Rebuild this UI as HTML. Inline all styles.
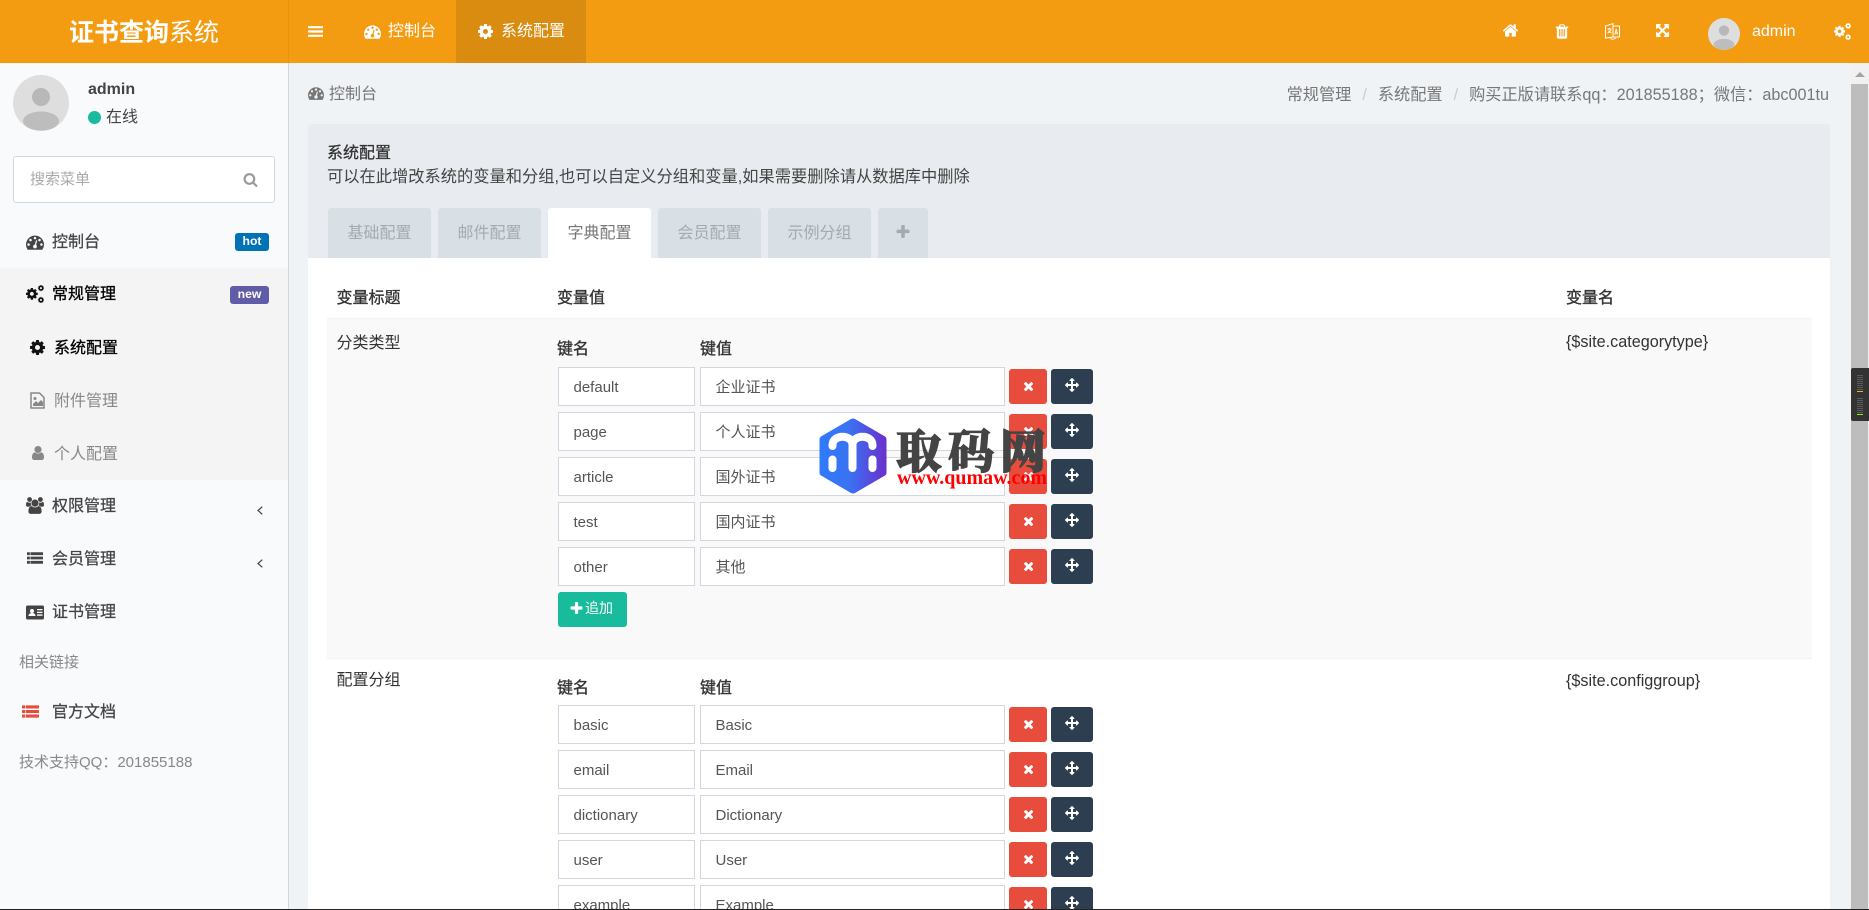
<!DOCTYPE html>
<html lang="zh"><head><meta charset="utf-8"><title>系统配置</title>
<style>
*{box-sizing:border-box}
html,body{margin:0;padding:0;width:1869px;height:910px;overflow:hidden;background:#f0f3f6;font-family:"Liberation Sans","Noto Sans CJK SC",sans-serif;font-size:16px;color:#333}
#root{position:absolute;left:0;top:0;width:1869px;height:910px;overflow:hidden;background:#f0f3f6}
.a{position:absolute}
.t{position:absolute;white-space:nowrap;line-height:20px;height:20px;margin-top:1px}
svg.i{position:absolute;display:block}
.m{color:#444;-webkit-text-stroke:.25px #444}
.k{color:#000;-webkit-text-stroke:.3px #000}
.s{color:#888}
.tab{position:absolute;top:208px;height:50px;width:103px;background:#d8dfe5;border-radius:3px 3px 0 0;color:#a3abaf;text-align:center;line-height:52px}
.inp{position:absolute;height:39px;border:1px solid #d2d6de;background:#fff;font-size:15px;line-height:39px;padding-left:14.5px;color:#555;white-space:nowrap}
.del{position:absolute;left:1009px;width:38px;height:35px;background:#e74c3c;border-radius:3px}
.mv{position:absolute;left:1051px;width:42px;height:35px;background:#2c3e50;border-radius:3px}
.bd{position:absolute;height:18px;border-radius:3px;color:#fff;font-size:12.2px;font-weight:700;text-align:center;line-height:16px}
</style></head><body>
<div id="root">
<svg width="0" height="0" style="position:absolute"><defs>
<path id="x" d="M1490 1322q0 40-28 68l-136 136q-28 28-68 28t-68-28l-294-294-294 294q-28 28-68 28t-68-28l-136-136q-28-28-28-68t28-68l294-294-294-294q-28-28-28-68t28-68l136-136q28-28 68-28t68 28l294 294 294-294q28-28 68-28t68 28l136 136q28 28 28 68t-28 68l-294 294 294 294q28 28 28 68z"/>
<path id="ar" d="M1792 896q0 26-19 45l-256 256q-19 19-45 19t-45-19-19-45v-128h-384v384h128q26 0 45 19t19 45-19 45l-256 256q-19 19-45 19t-45-19l-256-256q-19-19-19-45t19-45 45-19h128v-384h-384v128q0 26-19 45t-45 19-45-19l-256-256q-19-19-19-45t19-45l256-256q19-19 45-19t45 19 19 45v128h384v-384h-128q-26 0-45-19t-19-45 19-45l256-256q19-19 45-19t45 19l256 256q19 19 19 45t-19 45-45 19h-128v384h384v-128q0-26 19-45t45-19 45 19l256 256q19 19 19 45z"/>
<path id="cog" d="M1152 896q0-106-75-181t-181-75-181 75-75 181 75 181 181 75 181-75 75-181zm512-109v222q0 12-8 23t-20 13l-185 28q-19 54-39 91 35 50 107 138 10 12 10 25t-9 23q-27 37-99 108t-94 71q-12 0-26-9l-138-108q-44 23-91 38-16 136-29 186-7 28-36 28h-222q-14 0-24.500-8.500t-11.500-21.500l-28-184q-49-16-90-37l-141 107q-10 9-25 9-14 0-25-11-126-114-165-168-7-10-7-23 0-12 8-23 15-21 51-66.500t54-70.500q-27-50-41-99l-183-27q-13-2-21-12.500t-8-23.500v-222q0-12 8-23t19-13l186-28q14-46 39-92-40-57-107-138-10-12-10-24 0-10 9-23 26-36 98.500-107.500t94.500-71.500q13 0 26 10l138 107q44-23 91-38 16-136 29-186 7-28 36-28h222q14 0 24.500 8.500t11.500 21.500l28 184q49 16 90 37l142-107q9-9 24-9 13 0 25 10 129 119 165 170 7 8 7 22 0 12-8 23-15 21-51 66.500t-54 70.500q26 50 41 98l183 28q13 2 21 12.500t8 23.500z"/>
<path id="dash" d="M384 1152q0-53-37.500-90.500t-90.500-37.500-90.500 37.500-37.500 90.500 37.500 90.500 90.500 37.500 90.500-37.500 37.500-90.500zm192-448q0-53-37.500-90.500t-90.500-37.500-90.500 37.500-37.500 90.500 37.500 90.500 90.500 37.500 90.500-37.500 37.500-90.500zm428 481l101-382q6-26-7.500-48.500t-38.500-29.500-48 6.500-30 39.500l-101 382q-60 5-107 43.500t-63 98.500q-20 77 20 146t117 89 146-20 89-117q16-60-6-117t-72-91zm660-33q0-53-37.500-90.500t-90.500-37.500-90.500 37.500-37.500 90.500 37.500 90.500 90.500 37.500 90.500-37.500 37.500-90.500zm-640-640q0-53-37.500-90.500t-90.500-37.500-90.500 37.500-37.500 90.500 37.500 90.500 90.500 37.500 90.500-37.500 37.500-90.500zm448 192q0-53-37.500-90.500t-90.500-37.500-90.500 37.500-37.500 90.500 37.500 90.500 90.500 37.500 90.500-37.500 37.500-90.500zm320 448q0 261-141 483-19 29-54 29h-1402q-35 0-54-29-141-221-141-483 0-182 71-348t191-286 286-191 348-71 348 71 286 191 191 286 71 348z"/>
<g id="cogs"><use href="#cog" transform="translate(-97,200) scale(.76)"/><use href="#cog" transform="translate(1130,-51) scale(.4)"/><use href="#cog" transform="translate(1130,1130) scale(.4)"/></g>
<path id="user" d="M1536 1399q0 109-62.500 187t-150.500 78h-854q-88 0-150.500-78t-62.500-187q0-85 8.500-160.500t31.500-152 58.500-131 94-89 134.500-34.500q131 128 313 128t313-128q76 0 134.500 34.500t94 89 58.500 131 31.500 152 8.500 160.500zm-256-887q0 159-112.500 271.500t-271.500 112.500-271.500-112.500-112.500-271.500 112.500-271.500 271.500-112.500 271.500 112.500 112.500 271.500z"/>
<g id="list"><rect x="0" y="256" width="320" height="320" rx="30"/><rect x="384" y="256" width="1408" height="320" rx="30"/><rect x="0" y="736" width="320" height="320" rx="30"/><rect x="384" y="736" width="1408" height="320" rx="30"/><rect x="0" y="1216" width="320" height="320" rx="30"/><rect x="384" y="1216" width="1408" height="320" rx="30"/></g>
<g id="av"><circle cx="28" cy="28" r="28" fill="#dedede"/><circle cx="28" cy="22" r="9" fill="#b8b8b8"/><ellipse cx="28" cy="46" rx="18" ry="9.500" fill="#bdbdbd"/></g>
<linearGradient id="hg" x1="0" x2="1" y1="0" y2="0"><stop offset="0" stop-color="#2f7bfb"/><stop offset=".45" stop-color="#3a72f3"/><stop offset="1" stop-color="#6a2fcc"/></linearGradient>
</defs></svg>

<!-- header -->
<div class="a" style="left:0;top:0;width:1869px;height:63px;background:#f39c12"></div>
<div class="a" style="left:288px;top:0;width:1px;height:63px;background:#e59410"></div>
<div class="a" style="left:456px;top:0;width:130px;height:63px;background:#da8c10"></div>
<div class="t" style="left:69px;top:17px;height:30px;line-height:30px;font-size:25px;color:#fff"><b>证书查询</b>系统</div>
<svg class="i" style="left:308px;top:24px" width="15" height="15" viewBox="0 0 1536 1792" preserveAspectRatio="none"><path fill="#fff" d="M1536 1344v128q0 26-19 45t-45 19H64q-26 0-45-19t-19-45v-128q0-26 19-45t45-19h1408q26 0 45 19t19 45zm0-512v128q0 26-19 45t-45 19H64q-26 0-45-19t-19-45V832q0-26 19-45t45-19h1408q26 0 45 19t19 45zm0-512v128q0 26-19 45t-45 19H64q-26 0-45-19t-19-45V320q0-26 19-45t45-19h1408q26 0 45 19t19 45z"/></svg>
<svg class="i" style="left:364px;top:23px" width="17" height="17" viewBox="0 0 1792 1792" fill="#fff"><use href="#dash"/></svg>
<div class="t" style="left:388px;top:21px;color:#fff">控制台</div>
<svg class="i" style="left:478px;top:24px" width="15" height="15" viewBox="128 128 1536 1536" fill="#fff"><use href="#cog"/></svg>
<div class="t" style="left:501px;top:21px;color:#fff">系统配置</div>
<svg class="i" style="left:1502px;top:22px" width="17" height="17" viewBox="0 0 1792 1792"><path fill="#fff" d="M1472 992v480q0 26-19 45t-45 19h-384v-384h-256v384h-384q-26 0-45-19t-19-45v-480q0-1 .5-3t.5-3l575-474 575 474q1 2 1 6zm223-69l-62 74q-8 9-21 11h-3q-13 0-21-7l-692-577-692 577q-12 8-24 7-13-2-21-11l-62-74q-8-10-7-23.500t11-21.500l719-599q32-26 76-26t76 26l244 204v-195q0-14 9-23t23-9h192q14 0 23 9t9 23v408l219 182q10 8 11 21.500t-7 23.500z"/></svg>
<svg class="i" style="left:1554px;top:23px" width="16" height="17" viewBox="0 0 1792 1792" preserveAspectRatio="none"><path fill="#fff" d="M704 1376V672q0-14-9-23t-23-9h-64q-14 0-23 9t-9 23v704q0 14 9 23t23 9h64q14 0 23-9t9-23zm256 0V672q0-14-9-23t-23-9h-64q-14 0-23 9t-9 23v704q0 14 9 23t23 9h64q14 0 23-9t9-23zm256 0V672q0-14-9-23t-23-9h-64q-14 0-23 9t-9 23v704q0 14 9 23t23 9h64q14 0 23-9t9-23zM672 384h448l-48-117q-7-9-17-11H738q-10 2-17 11zm928 32v64q0 14-9 23t-23 9h-96v948q0 83-47 143.500t-113 60.500H480q-66 0-113-58.500T320 1464V512h-96q-14 0-23-9t-9-23v-64q0-14 9-23t23-9h309l70-167q15-37 54-63t79-26h320q40 0 79 26t54 63l70 167h309q14 0 23 9t9 23z"/></svg>
<svg class="i" style="left:1605px;top:23px" width="15" height="17" viewBox="0 0 15 17"><path fill="none" stroke="#fff" stroke-width="1" d="M.5 3L8 .7V14L.5 15z"/><path fill="none" stroke="#fff" stroke-width="1" d="M8 3h6.500v11H8"/><path fill="none" stroke="#fff" stroke-width=".9" d="M9.800 11.500l1.400-5.500 1.400 5.500M10.300 10h1.800"/><path fill="none" stroke="#fff" stroke-width=".9" d="M2.500 6h4M4.500 5v1M6 6.500c-.5 2-2 3-3.500 3.500M3.500 7.500c.5 1 1.500 2 3 2.500M5 15l2.500 1.500L11 15"/></svg>
<svg class="i" style="left:1656px;top:24px" width="15" height="15" viewBox="0 0 1792 1792"><path fill="#fff" stroke="#fff" stroke-width="40" d="M1283 413L928 768l355 355 144-144q29-31 70-14 39 17 39 59v448q0 26-19 45t-45 19h-448q-42 0-59-40-17-39 14-69l144-144-355-355-355 355 144 144q31 30 14 69-17 40-59 40H64q-26 0-45-19t-19-45v-448q0-42 40-59 39-17 69 14l144 144 355-355-355-355-144 144q-19 19-45 19-12 0-24-5-40-17-40-59V64q0-26 19-45T64 0h448q42 0 59 40 17 39-14 69L413 253l355 355 355-355-144-144q-31-30-14-69 17-40 59-40h448q26 0 45 19t19 45v448q0 42-39 59-13 5-25 5-26 0-45-19z"/></svg>
<svg class="i" style="left:1708px;top:18px" width="32" height="32" viewBox="0 0 56 56"><use href="#av"/></svg>
<div class="t" style="left:1752px;top:21px;color:#fff">admin</div>
<svg class="i" style="left:1834px;top:23px" width="17" height="17" viewBox="0 0 1792 1792" fill="#fff"><use href="#cogs"/></svg>

<!-- sidebar -->
<div class="a" style="left:0;top:63px;width:289px;height:847px;background:#f9fafc;border-right:1px solid #d2d6de"></div>
<div class="a" style="left:0;top:268px;width:288px;height:212px;background:#f4f4f5"></div>
<svg class="i" style="left:13px;top:75px" width="56" height="56" viewBox="0 0 56 56"><use href="#av"/></svg>
<div class="t" style="left:88px;top:79px;font-weight:700;color:#444">admin</div>
<div class="a" style="left:88px;top:111px;width:13px;height:13px;border-radius:50%;background:#18bc9c"></div>
<div class="t" style="left:106px;top:107px;color:#444">在线</div>
<div class="a" style="left:13px;top:156px;width:262px;height:47px;background:#fff;border:1px solid #d2d6de;border-radius:3px"></div>
<div class="t" style="left:30px;top:169px;font-size:15px;color:#a9a9a9">搜索菜单</div>
<svg class="i" style="left:243px;top:172px" width="15" height="15" viewBox="0 0 1792 1792"><path fill="#999" d="M1216 832q0-185-131.500-316.500T768 384 451.500 515.500 320 832t131.500 316.500T768 1280t316.500-131.500T1216 832zm512 832q0 52-38 90t-90 38q-54 0-90-38l-343-342q-179 124-399 124-143 0-273.500-55.500t-225-150-150-225T64 832t55.500-273.500 150-225 225-150T768 128t273.500 55.500 225 150 150 225T1472 832q0 220-124 399l343 343q37 37 37 90z"/></svg>

<svg class="i" style="left:26px;top:233px" width="18" height="18" viewBox="0 0 1792 1792" fill="#444"><use href="#dash"/></svg>
<div class="t m" style="left:52px;top:232px">控制台</div>
<div class="bd" style="left:235px;top:233px;width:34px;background:#0073b7">hot</div>

<svg class="i" style="left:26px;top:285px" width="18" height="18" viewBox="0 0 1792 1792" fill="#111"><use href="#cogs"/></svg>
<div class="t k" style="left:52px;top:284px">常规管理</div>
<div class="bd" style="left:230px;top:286px;width:39px;background:#605ca8">new</div>

<svg class="i" style="left:30px;top:340px" width="15" height="15" viewBox="128 128 1536 1536" fill="#111"><use href="#cog"/></svg>
<div class="t k" style="left:54px;top:338px">系统配置</div>

<svg class="i" style="left:30px;top:392px" width="15" height="17" viewBox="0 0 15 17"><path fill="none" stroke="#888" stroke-width="1.500" d="M1 1h8.500L14 5.500V16H1z"/><path fill="#888" d="M3 14v-2l3-3 2 2 3-3 2 2v4z"/><circle cx="5" cy="6.500" r="1.500" fill="#888"/></svg>
<div class="t s" style="left:54px;top:391px">附件管理</div>

<svg class="i" style="left:32px;top:446px" width="12" height="14" viewBox="256 128 1280 1536" preserveAspectRatio="none" fill="#888"><use href="#user"/></svg>
<div class="t s" style="left:54px;top:444px">个人配置</div>

<svg class="i" style="left:26px;top:497px" width="18" height="17" viewBox="0 0 1920 1792" fill="#444"><path d="M593 896q-162 5-265 128H194q-82 0-138-40.500T0 865q0-353 124-353 6 0 43.500 21t97.500 42.500T384 597q67 0 133-23-5 37-5 66 0 139 81 256zm1071 637q0 120-73 189.500t-194 69.500H523q-121 0-194-69.500T256 1533q0-53 3.500-103.500t14-109 26.500-108.500 43-97.500 62-81 85.500-53.500T602 960q10 0 43 21.500t73 48 107 48 135 21.500 135-21.500 107-48 73-48 43-21.500q61 0 111.500 20t85.500 53.500 62 81 43 97.500 26.500 108.500 14 109 3.500 103.500zM640 256q0 106-75 181t-181 75-181-75-75-181 75-181T384 0t181 75 75 181zm704 384q0 159-112.500 271.500T960 1024 688.500 911.500 576 640t112.500-271.500T960 256t271.500 112.500T1344 640zm576 225q0 78-56 118.500t-138 40.500h-134q-103-123-265-128 81-117 81-256 0-29-5-66 66 23 133 23 59 0 119-21.500t97.500-42.500 43.500-21q124 0 124 353zm-128-609q0 106-75 181t-181 75-181-75-75-181 75-181 181-75 181 75 75 181z"/></svg>
<div class="t m" style="left:52px;top:496px">权限管理</div>
<svg class="i" style="left:257px;top:506px" width="6" height="9" viewBox="0 0 6 9"><path fill="none" stroke="#444" stroke-width="1.200" d="M5.300 .7L1 4.500l4.300 3.800"/></svg>

<svg class="i" style="left:27px;top:550px" width="16" height="16" viewBox="0 0 1792 1792" fill="#444"><use href="#list"/></svg>
<div class="t m" style="left:52px;top:549px">会员管理</div>
<svg class="i" style="left:257px;top:559px" width="6" height="9" viewBox="0 0 6 9"><path fill="none" stroke="#444" stroke-width="1.200" d="M5.300 .7L1 4.500l4.300 3.800"/></svg>

<svg class="i" style="left:26px;top:605px" width="18" height="15" viewBox="0 0 18 15"><rect width="18" height="14" y=".5" rx="1.500" fill="#444"/><circle cx="6" cy="6" r="2" fill="#fff"/><path d="M2.500 11c0-2 1.500-3 3.500-3s3.500 1 3.500 3z" fill="#fff"/><path d="M11 4h5.500v1.300H11zM11 6.700h5.500V8H11zM11 9.400h5.500v1.300H11z" fill="#fff"/></svg>
<div class="t m" style="left:52px;top:602px">证书管理</div>

<div class="t s" style="left:19px;top:652px;font-size:15px">相关链接</div>
<svg class="i" style="left:22px;top:703px" width="17" height="17" viewBox="0 0 1792 1792" fill="#e74c3c"><use href="#list"/></svg>
<div class="t m" style="left:52px;top:702px">官方文档</div>
<div class="t s" style="left:19px;top:752px;font-size:15px">技术支持QQ：201855188</div>

<!-- breadcrumb -->
<svg class="i" style="left:308px;top:85px" width="16" height="16" viewBox="0 0 1792 1792" fill="#777"><use href="#dash"/></svg>
<div class="t" style="left:329px;top:84px;color:#777">控制台</div>
<div class="t" style="right:40px;top:84px;color:#777;font-size:16.2px">常规管理<span style="color:#ccc;padding:0 11px">/</span>系统配置<span style="color:#ccc;padding:0 11px">/</span>购买正版请联系qq：201855188；微信：abc001tu</div>

<!-- panel -->
<div class="a" style="left:308px;top:124px;width:1522px;height:134px;background:#e8ecf0;border-radius:3px 3px 0 0"></div>
<div class="a" style="left:308px;top:258px;width:1522px;height:652px;background:#fff"></div>
<div class="t" style="left:327px;top:143px;color:#333;-webkit-text-stroke:.3px #333">系统配置</div>
<div class="t" style="left:327px;top:166px;color:#444;font-size:16.25px">可以在此增改系统的变量和分组,也可以自定义分组和变量,如果需要删除请从数据库中删除</div>
<div class="tab" style="left:328px">基础配置</div>
<div class="tab" style="left:438px">邮件配置</div>
<div class="tab" style="left:548px;background:#fff;color:#777">字典配置</div>
<div class="tab" style="left:658px">会员配置</div>
<div class="tab" style="left:768px">示例分组</div>
<div class="tab" style="left:878px;width:50px"></div>
<svg class="i" style="left:896px;top:225px" width="14" height="14" viewBox="128 128 1536 1536"><path fill="#a3abaf" d="M1600 736v192q0 40-28 68t-68 28h-416v416q0 40-28 68t-68 28H800q-40 0-68-28t-28-68v-416H288q-40 0-68-28t-28-68V736q0-40 28-68t68-28h416V224q0-40 28-68t68-28h192q40 0 68 28t28 68v416h416q40 0 68 28t28 68z"/></svg>

<div class="t" style="left:336.500px;top:288px;-webkit-text-stroke:.35px #333">变量标题</div>
<div class="t" style="left:557px;top:288px;-webkit-text-stroke:.35px #333">变量值</div>
<div class="t" style="left:1566px;top:288px;-webkit-text-stroke:.35px #333">变量名</div>

<div class="a" style="left:327px;top:319px;width:1485px;height:339px;background:#f9f9f9"></div>
<div class="a" style="left:327px;top:318px;width:1485px;height:1px;background:#f4f4f4"></div>
<div class="a" style="left:327px;top:658px;width:1485px;height:1px;background:#f4f4f4"></div>

<div class="t" style="left:336.500px;top:333px;color:#333">分类类型</div>
<div class="t" style="left:1566px;top:331px;font-size:16.2px;color:#333">{$site.categorytype}</div>
<div class="t" style="left:557px;top:339px;-webkit-text-stroke:.35px #333">键名</div>
<div class="t" style="left:700px;top:339px;-webkit-text-stroke:.35px #333">键值</div>

<div class="inp" style="left:558px;top:367px;width:137px">default</div><div class="inp" style="left:700px;top:367px;width:305px">企业证书</div>
<div class="del" style="top:369px"></div><div class="mv" style="top:369px"></div>
<div class="inp" style="left:558px;top:412px;width:137px">page</div><div class="inp" style="left:700px;top:412px;width:305px">个人证书</div>
<div class="del" style="top:414px"></div><div class="mv" style="top:414px"></div>
<div class="inp" style="left:558px;top:457px;width:137px">article</div><div class="inp" style="left:700px;top:457px;width:305px">国外证书</div>
<div class="del" style="top:459px"></div><div class="mv" style="top:459px"></div>
<div class="inp" style="left:558px;top:502px;width:137px">test</div><div class="inp" style="left:700px;top:502px;width:305px">国内证书</div>
<div class="del" style="top:504px"></div><div class="mv" style="top:504px"></div>
<div class="inp" style="left:558px;top:547px;width:137px">other</div><div class="inp" style="left:700px;top:547px;width:305px">其他</div>
<div class="del" style="top:549px"></div><div class="mv" style="top:549px"></div>

<div class="a" style="left:558px;top:592px;width:69px;height:35px;background:#18bc9c;border-radius:3px"></div>
<svg class="i" style="left:570px;top:602px" width="13" height="13" viewBox="128 128 1536 1536"><path fill="#fff" d="M1600 736v192q0 40-28 68t-68 28h-416v416q0 40-28 68t-68 28H800q-40 0-68-28t-28-68v-416H288q-40 0-68-28t-28-68V736q0-40 28-68t68-28h416V224q0-40 28-68t68-28h192q40 0 68 28t28 68v416h416q40 0 68 28t28 68z"/></svg>
<div class="t" style="left:585px;top:597px;font-size:14px;color:#fff">追加</div>

<div class="t" style="left:336.500px;top:670px;color:#333">配置分组</div>
<div class="t" style="left:1566px;top:670px;font-size:16.2px;color:#333">{$site.configgroup}</div>
<div class="t" style="left:557px;top:678px;-webkit-text-stroke:.35px #333">键名</div>
<div class="t" style="left:700px;top:678px;-webkit-text-stroke:.35px #333">键值</div>

<div class="inp" style="left:558px;top:705px;width:137px">basic</div><div class="inp" style="left:700px;top:705px;width:305px">Basic</div>
<div class="del" style="top:707px"></div><div class="mv" style="top:707px"></div>
<div class="inp" style="left:558px;top:750px;width:137px">email</div><div class="inp" style="left:700px;top:750px;width:305px">Email</div>
<div class="del" style="top:752px"></div><div class="mv" style="top:752px"></div>
<div class="inp" style="left:558px;top:795px;width:137px">dictionary</div><div class="inp" style="left:700px;top:795px;width:305px">Dictionary</div>
<div class="del" style="top:797px"></div><div class="mv" style="top:797px"></div>
<div class="inp" style="left:558px;top:840px;width:137px">user</div><div class="inp" style="left:700px;top:840px;width:305px">User</div>
<div class="del" style="top:842px"></div><div class="mv" style="top:842px"></div>
<div class="inp" style="left:558px;top:885px;width:137px">example</div><div class="inp" style="left:700px;top:885px;width:305px">Example</div>
<div class="del" style="top:887px"></div><div class="mv" style="top:887px"></div>

<!-- button icons -->
<svg class="a" style="left:1009px;top:360px" width="84" height="550" viewBox="0 0 84 550" fill="#fff">
<g id="r1"><use href="#x" transform="translate(12.660,19.170) scale(.0077)" /><use href="#ar" transform="translate(56,18) scale(.0078)"/></g>
<use href="#r1" y="45"/><use href="#r1" y="90"/><use href="#r1" y="135"/><use href="#r1" y="180"/>
<use href="#r1" y="338"/><use href="#r1" y="383"/><use href="#r1" y="428"/><use href="#r1" y="473"/><use href="#r1" y="518"/>
</svg>

<!-- watermark -->
<svg class="a" style="left:819px;top:418px" width="68" height="76" viewBox="0 0 68 76"><path fill="url(#hg)" d="M34 0.500Q35 0.500 36 1L66 18.500Q67.500 19.500 67.500 21V55Q67.500 56.500 66 57.500L36 75Q34 76 32 75L2 57.500Q.5 56.500 .5 55V21Q.5 19.500 2 18.500L32 1Q33 .5 34 .5z"/><path fill="none" stroke="#fff" stroke-width="8" stroke-linecap="round" d="M13.500 28v-1c0-11 20-11 20 0v23M33.500 27c0-11 20-11 20 0v1"/><path fill="none" stroke="#fff" stroke-width="8" stroke-linecap="round" d="M13.500 41.500v8.500M53.500 41.500v8.500"/></svg>
<div class="t" style="left:896px;top:421px;height:54px;line-height:54px;font-family:'Noto Serif CJK SC','Liberation Serif',serif;font-weight:900;font-size:46px;letter-spacing:6px;color:#444;-webkit-text-stroke:1.2px #444">取码网</div>
<div class="t" style="left:897px;top:467px;font-family:'Liberation Serif',serif;font-weight:700;font-size:20px;color:#f00">www.qumaw.com</div>

<!-- scrollbar -->
<div class="a" style="left:1851px;top:63px;width:18px;height:847px;background:#f1f1f1"></div>
<div class="a" style="left:1851px;top:84px;width:17px;height:826px;background:#bdbdbd"></div>
<svg class="a" style="left:1851px;top:63px" width="18" height="21" viewBox="0 0 18 21"><path fill="#a3a3a3" d="M4 14l5-5 5 5z"/></svg>
<div class="a" style="left:1851px;top:368px;width:18px;height:53px;background:#333;border-radius:2px 0 0 2px"></div>
<svg class="a" style="left:1857px;top:374px" width="6" height="42" viewBox="0 0 6 42" fill="#5a5a5a"><path d="M0 1h6v1H0zM0 3h6v1H0zM0 5h6v1H0zM0 7h6v1H0zM0 9h6v1H0zM0 11h6v1H0zM0 13h6v1H0zM0 15h6v1H0zM0 24h6v1H0zM0 26h6v1H0zM0 28h6v1H0zM0 30h6v1H0zM0 32h6v1H0zM0 34h6v1H0zM0 36h6v1H0zM0 38h6v1H0z"/><path fill="#ffa726" d="M0 17h6v1H0z"/><path fill="#7cfc00" d="M0 40h6v1H0z"/></svg>
<div class="a" style="left:0;top:909px;width:1869px;height:1px;background:#222"></div>
</div>
</body></html>
